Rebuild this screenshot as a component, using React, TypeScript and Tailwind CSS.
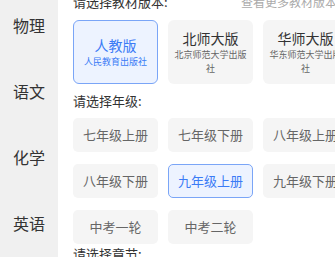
import { useState } from "react";

const SUBJECTS = ["物理", "语文", "化学", "英语"];

const BOOKS = [
  { id: "rj", name: "人教版", press: "人民教育出版社" },
  { id: "bs", name: "北师大版", press: "北京师范大学出版社" },
  { id: "hs", name: "华师大版", press: "华东师范大学出版社" },
];

const GRADES = [
  "七年级上册",
  "七年级下册",
  "八年级上册",
  "八年级下册",
  "九年级上册",
  "九年级下册",
  "中考一轮",
  "中考二轮",
];

export default function App() {
  const [subject, setSubject] = useState("化学");
  const [book, setBook] = useState("rj");
  const [grade, setGrade] = useState("九年级上册");

  return (
    <div
      className="flex h-[257px] w-[335px] overflow-hidden bg-white"
      style={{ fontFamily: '"Noto Sans CJK SC", "Noto Sans", sans-serif' }}
    >
      {/* SUBJECT SIDEBAR */}
      <div className="w-[58px] shrink-0 bg-[#f0f0f0]">
        <div className="-mt-[8px] flex flex-col">
          {SUBJECTS.map((s) => (
            <button
              key={s}
              type="button"
              onClick={() => setSubject(s)}
              className={`flex h-[66px] items-center justify-center text-[16px] ${
                subject === s ? "text-[#333]" : "text-[#333]"
              }`}
            >
              {s}
            </button>
          ))}
        </div>
      </div>

      {/* MAIN */}
      <div className="min-w-0 flex-1 overflow-hidden pl-[15px]">
        <div className="-mt-[6px] flex h-[16px] items-center justify-between whitespace-nowrap">
          <span className="text-[13px] text-[#333]">请选择教材版本:</span>
          <span className="-mr-[2px] text-[12px] text-[#aaa]">查看更多教材版本</span>
        </div>

        <div className="mt-[10px] flex gap-[10px]">
          {BOOKS.map((b) => {
            const active = book === b.id;
            return (
              <button
                key={b.id}
                type="button"
                onClick={() => setBook(b.id)}
                className={`flex h-[64px] w-[85px] shrink-0 flex-col items-center justify-center rounded-[6px] border px-[5px] text-center ${
                  active
                    ? "border-[#7aa5f7] bg-[#edf3ff] text-[#3b7bf6]"
                    : "border-transparent bg-[#f5f5f5] text-[#333]"
                }`}
              >
                <span className="text-[14px] leading-[18px]">{b.name}</span>
                <span
                  className={`mt-[1px] text-[9px] leading-[14px] ${
                    active ? "text-[#3b7bf6]" : "text-[#666]"
                  }`}
                >
                  {b.press}
                </span>
              </button>
            );
          })}
        </div>

        <div className="mt-[9px] flex h-[16px] items-center text-[13px] text-[#333]">
          请选择年级:
        </div>

        <div className="mt-[9px] grid grid-cols-[repeat(3,85px)] gap-x-[10px] gap-y-[12px]">
          {GRADES.map((g) => {
            const active = grade === g;
            return (
              <button
                key={g}
                type="button"
                onClick={() => setGrade(g)}
                className={`flex h-[34px] items-center justify-center rounded-[5px] border text-[13px] ${
                  active
                    ? "border-[#7aa5f7] bg-[#edf3ff] text-[#3b7bf6]"
                    : "border-transparent bg-[#f5f5f5] text-[#666]"
                }`}
              >
                {g}
              </button>
            );
          })}
        </div>

        <div className="mt-[2px] flex h-[16px] items-center text-[13px] text-[#333]">
          请选择章节:
        </div>
      </div>
    </div>
  );
}
